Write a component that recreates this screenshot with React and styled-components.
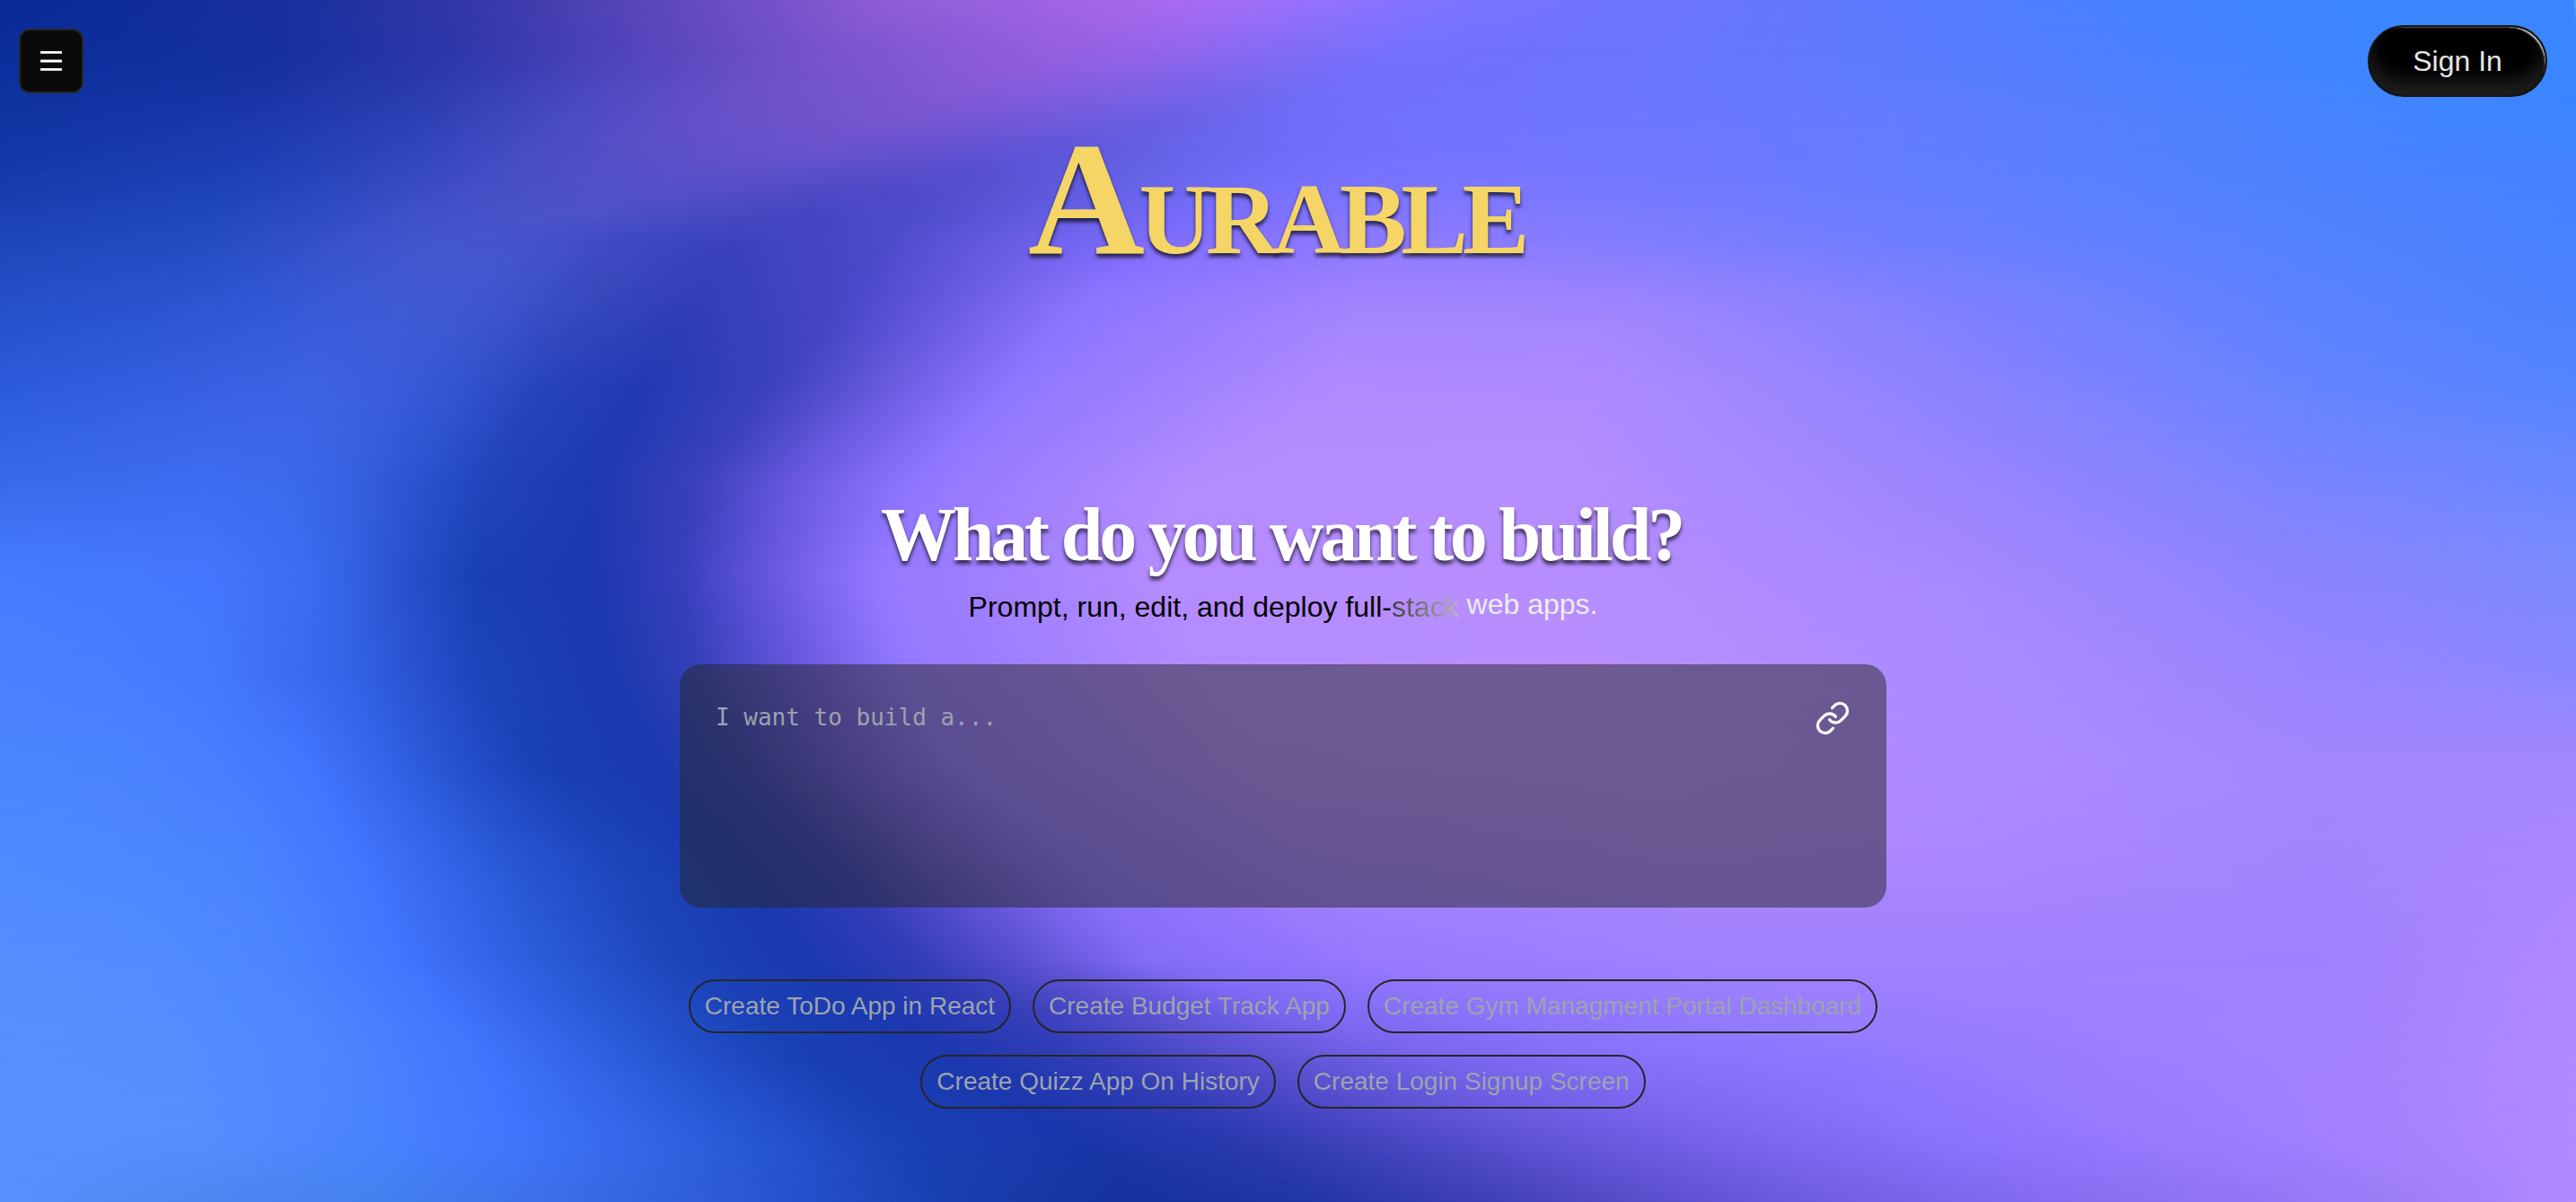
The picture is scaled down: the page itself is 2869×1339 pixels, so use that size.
import React from "react";
import styled, { createGlobalStyle } from "styled-components";
import { Link as LinkIcon } from "lucide-react";

const GlobalStyle = createGlobalStyle`
  *, *::before, *::after { box-sizing: border-box; }
  body { margin: 0; background: #1a38ae; }
`;

const sans = `"Liberation Sans", Arial, Helvetica, sans-serif`;
const serif = `"Liberation Serif", "Times New Roman", Times, serif`;
const mono = `"DejaVu Sans Mono", monospace`;

/*
 * Mesh of the backdrop. Each line is one height (in percent) with its "colour position" stops.
 * The n-th stop of a line continues as the n-th stop of the next one, so that the
 * dark arc and the light ridges bend smoothly from line to line.
 */
const MESH = [
  [0, "082a94 0,1a309e 11.6,3638a8 18.5,6048c0 26,905ed6 34.7,a868ec 44.5,a46ef8 48,9072ff 52,7e74ff 56,7274fe 61,6a76fe 67,5c7aff 73,4c80ff 80,4284ff 86,3a86ff 92,3a86ff 100"],
  [5, "0a2f9e 0,142f9e 10,2e38aa 18,5446bc 25,7452ca 31.5,925ede 40.5,9064ea 45,7e6cf4 50,7470fe 54,7072ff 59,6a76ff 65,607aff 72,527eff 79,4682ff 86,3c86ff 92,3a86ff 100"],
  [10, "1034a2 0,1c38ac 10,2c40b4 16,4a4cc4 22,6450c8 27,7856d0 35,725ada 40,6a5ee2 45,6e6cf8 50,7272ff 54,7074ff 59,6a78ff 67,627cff 75,5480ff 83,4684ff 91,3c84ff 100"],
  [15, "163aaa 0,1c42b6 9,3048be 14.5,404cc4 18,4c50c6 21.5,5a50c8 27,564cc6 32,524acb 36,5e5ada 41,6a68f0 46,7672ff 51,7876ff 58,6c7aff 68,5a80ff 80,4c82ff 90,4682ff 100"],
  [20, "1e46ba 0,244cc2 8,3450c8 12,3e54cc 14.5,4456cc 17,4654cc 20.5,3e48c0 24.5,3c42bc 28.5,4c4ac8 34,6c60e8 40,806eff 45,8e7aff 54,847cff 62,6c7eff 75,5482ff 89,4882ff 100"],
  [25, "2450c8 0,2a54ce 6,3058d4 10,3a5ad6 13,405ad4 16,4056ce 19,384abe 22.5,323eb6 27,4a48c8 33,7060e8 38,8c74ff 42,a284ff 53,9e84ff 63,7e80ff 76,5a82ff 90,4c82ff 100"],
  [32, "2c5adc 0,325edf 5,3860e2 8.5,3d62e4 12,3c5edd 14.5,3456d2 17.5,2844bc 21,223ab2 25,3c42bc 30,6e5ee2 35,8f78ff 39.5,b08aff 52,ae8aff 62,8882ff 77,6484ff 90,5484ff 100"],
  [40, "386ae8 0,3c6aec 4,3e6cf0 8,3c6aec 11,3662e2 13.5,2c54d0 16,2044bc 19,1e3ab0 23,3a40ba 27,6a5ae0 31,9076ff 35.5,b28cff 46,b68eff 60,9884ff 77,7a84ff 89,6a88ff 100"],
  [48, "467cff 0,457aff 4,4476ff 8,3c6cf0 12,3462e4 13.5,2850cc 15.8,1a40b4 18.5,1c38ae 23,3840bc 26.5,6a58e2 30,9478ff 34,b48cff 45,b88eff 59,a888ff 75,8c84ff 89,7c8aff 100"],
  [56, "4a80ff 0,487eff 4,447aff 8,3c6cf4 11.2,3464e6 13.5,2a54d4 15.8,1c44ba 18.7,1a39ae 23.5,3440b8 27,6658dc 31,9278ff 35,b48cff 47,b88eff 62,aa8aff 77,9884ff 90,8a88ff 100"],
  [64, "4c86ff 0,4b84ff 4.5,487eff 8.5,4276ff 12,3464e8 15,2450cc 18,1a40b6 21,1a39ae 25.5,343eb8 29,6456da 32.8,8e74fc 37,b08aff 49,b48cff 64,ae8aff 76,a286ff 90,a486ff 100"],
  [72, "508aff 0,4e88ff 5,4b84ff 9.5,4276ff 14,3566ea 17,2856d4 20,1c46bc 24,1a38ae 28.5,343cb8 32.5,5e52d2 36,8a70fa 41.5,a482ff 51,ac86ff 65,aa86ff 77,a284ff 90,aa86ff 100"],
  [80, "548eff 0,528cff 6,4c85ff 11,4276ff 15.5,3464e8 19,2654ce 22.8,1c44b8 26.5,1a39ae 31,303cb6 35.3,5a50ce 39.8,846cf8 44.5,987aff 54,a082ff 67,a080ff 80,a080ff 90,ae88ff 100"],
  [88, "568fff 0,548eff 7,4e86ff 13,4074fc 19,3062e4 23,2350ca 27,1a40b6 31,1c38ae 37,343eb8 42.5,544ecc 47.5,7664ea 55,8470f8 62,8f78ff 72,9c7eff 82,a482ff 92,b08aff 100"],
  [95, "5890ff 0,568eff 8,4a84ff 14,4076ff 20,3264e4 25.5,2756d4 29.5,1a42b6 35,1a36aa 42.5,2c3ab0 48.5,4244be 53,6254d6 60,7662ea 66.5,8a72fc 75,987aff 84,a682ff 93,b08aff 100"],
  [100, "5890fc 0,4e86f0 8,4480ee 15,3c70e8 21,305ed8 27,2450ca 31.5,183eae 37,16329c 44,2236a4 51,3e40b4 57.5,5a4ecc 64,705ee0 71,826aee 78,8f74f4 86,a07ef8 94,b08aff 100"],
].map(([y, line]) => ({
  y,
  stops: line.split(",").map((stop) => {
    const [hex, x] = stop.split(" ");
    return [0, 2, 4].map((i) => parseInt(hex.slice(i, i + 2), 16)).concat(Number(x));
  }),
}));

const BAND_COUNT = 50;

function gradientAt(y) {
  const next = Math.max(1, MESH.findIndex((line) => line.y >= y));
  const a = MESH[next - 1];
  const b = MESH[next];
  const t = (y - a.y) / (b.y - a.y);
  const stops = a.stops.map((stop, i) => {
    const [r, g, bl, x] = stop.map((v, j) => v + (b.stops[i][j] - v) * t);
    return `rgb(${Math.round(r)}, ${Math.round(g)}, ${Math.round(bl)}) ${x.toFixed(2)}%`;
  });
  return `linear-gradient(to right, ${stops.join(", ")})`;
}

const BANDS = Array.from({ length: BAND_COUNT + 1 }, (_, i) => gradientAt((i * 100) / BAND_COUNT));

const Page = styled.div`
  position: relative;
  isolation: isolate;
  display: flex;
  flex-direction: column;
  min-height: 100vh;
  padding-right: 11px;
  font-family: ${sans};
`;

const Backdrop = styled.div`
  position: absolute;
  inset: 0;
  z-index: -1;
  display: grid;
  grid-template-columns: 1fr;
  grid-template-rows: repeat(${BAND_COUNT}, 1fr);
  overflow: hidden;

  &::after {
    content: "";
    grid-area: 1 / 1 / -1 / 2;
    justify-self: end;
    width: 2px;
    background: rgba(255, 255, 255, 0.2);
  }
`;

/* A band fades in over the row above its own line and stays solid below it. */
const Band = styled.div`
  grid-column: 1;
  grid-row: ${({ $index }) =>
    $index === 0 ? "1 / 3" : `${$index} / ${Math.min($index + 3, BAND_COUNT + 1)}`};
  background: ${({ $gradient }) => $gradient};
  mask-image: ${({ $index }) => {
    if ($index === 0) return "none";
    const rows = Math.min($index + 3, BAND_COUNT + 1) - $index;
    return `linear-gradient(to bottom, transparent, #000 ${100 / rows}%)`;
  }};
`;

const Header = styled.header`
  display: flex;
  align-items: center;
  justify-content: space-between;
  padding: 28px 21px 0;
`;

const MenuButton = styled.button`
  display: grid;
  place-items: center;
  width: 72px;
  height: 72px;
  padding: 0;
  border: 2px solid #262626;
  border-radius: 12px;
  background: #0a0a0a;
  color: #fff;
  cursor: pointer;
`;

const SignInButton = styled.button`
  width: 200px;
  height: 80px;
  padding: 0;
  border: 2px solid #161616;
  border-radius: 40px;
  background: #000;
  box-shadow:
    inset -4px 4px 2px -4px #fff,
    inset 0 -16px 20px #1e1e1e;
  color: #e5e5e5;
  font: 32px/40px ${sans};
  cursor: pointer;
`;

const Main = styled.main`
  display: flex;
  flex-direction: column;
  align-items: center;
  padding: 0 24px 96px;
`;

const Logo = styled.h1`
  margin: 0;
  padding: 26px 16px 0 0;
  color: #f5d565;
  font: bold small-caps 160px/176px ${serif};
  letter-spacing: -0.04em;
  text-shadow: 0 4px 4px rgba(0, 0, 0, 0.7);

  &::first-letter {
    font-size: 180px;
  }
`;

const Title = styled.h2`
  margin: 232px 0 0;
  padding-right: 4px;
  color: #fff;
  font: bold 84px/96px ${serif};
  letter-spacing: -0.05em;
  text-align: center;
  text-shadow: 0 4px 4px rgba(0, 0, 0, 0.7);
`;

const Tagline = styled.p`
  margin: 8px 0 0;
  color: #000;
  font-size: 32px;
  line-height: 48px;
  text-align: center;
`;

const Fade = styled.span`
  background: linear-gradient(to right, #3c3c3c, #bdbdbd);
  background-clip: text;
  color: transparent;
`;

const Lit = styled.span`
  display: inline-block;
  vertical-align: 3px;
  line-height: 32px;
  color: #ececec;
`;

const Prompt = styled.form`
  display: flex;
  align-items: flex-start;
  gap: 24px;
  width: 100%;
  max-width: 1344px;
  margin-top: 40px;
  padding: 40px;
  border-radius: 24px;
  background: rgba(38, 38, 38, 0.5);
`;

const PromptInput = styled.textarea`
  flex: 1;
  min-width: 0;
  height: 191px;
  padding: 0;
  border: 0;
  outline: 0;
  resize: none;
  background: transparent;
  color: #fff;
  font: 26px/38px ${mono};

  &::placeholder {
    color: #9ca3af;
    opacity: 1;
  }
`;

const IconButton = styled.button`
  display: grid;
  padding: 0;
  border: 0;
  background: none;
  color: #fafafa;
  cursor: pointer;
`;

const Suggestions = styled.div`
  display: flex;
  flex-wrap: wrap;
  justify-content: center;
  gap: 24px;
  width: 100%;
  max-width: 1344px;
  margin-top: 80px;
`;

const Chip = styled.button`
  height: 60px;
  padding: 0 16px;
  border: 2px solid #262626;
  border-radius: 30px;
  background: transparent;
  color: #9ca3af;
  font: 28px/40px ${sans};
  cursor: pointer;
`;

const SUGGESTIONS = [
  "Create ToDo App in React",
  "Create Budget Track App",
  "Create Gym Managment Portal Dashboard",
  "Create Quizz App On History",
  "Create Login Signup Screen",
];

function MenuIcon() {
  return (
    <svg width="24" height="22" viewBox="0 0 24 22" fill="currentColor" aria-hidden="true">
      <rect x="0" y="0" width="24" height="2.8" rx="0.5" />
      <rect x="0" y="9.6" width="24" height="2.8" rx="0.5" />
      <rect x="0" y="19" width="24" height="2.8" rx="0.5" />
    </svg>
  );
}

export default function App() {
  return (
    <Page>
      <GlobalStyle />
      <Backdrop aria-hidden="true">
        {BANDS.map((gradient, i) => (
          <Band key={i} $index={i} $gradient={gradient} />
        ))}
      </Backdrop>
      <Header>
        <MenuButton type="button" aria-label="Open menu">
          <MenuIcon />
        </MenuButton>
        <SignInButton type="button">Sign In</SignInButton>
      </Header>
      <Main>
        <Logo>Aurable</Logo>
        <Title>What do you want to build?</Title>
        <Tagline>
          Prompt, run, edit, and deploy full-<Fade>stack</Fade> <Lit>web apps.</Lit>
        </Tagline>
        <Prompt onSubmit={(e) => e.preventDefault()}>
          <PromptInput aria-label="Describe your app" placeholder="I want to build a..." />
          <IconButton type="button" aria-label="Attach a link">
            <LinkIcon size={40} />
          </IconButton>
        </Prompt>
        <Suggestions>
          {SUGGESTIONS.map((text) => (
            <Chip key={text} type="button">{text}</Chip>
          ))}
        </Suggestions>
      </Main>
    </Page>
  );
}
